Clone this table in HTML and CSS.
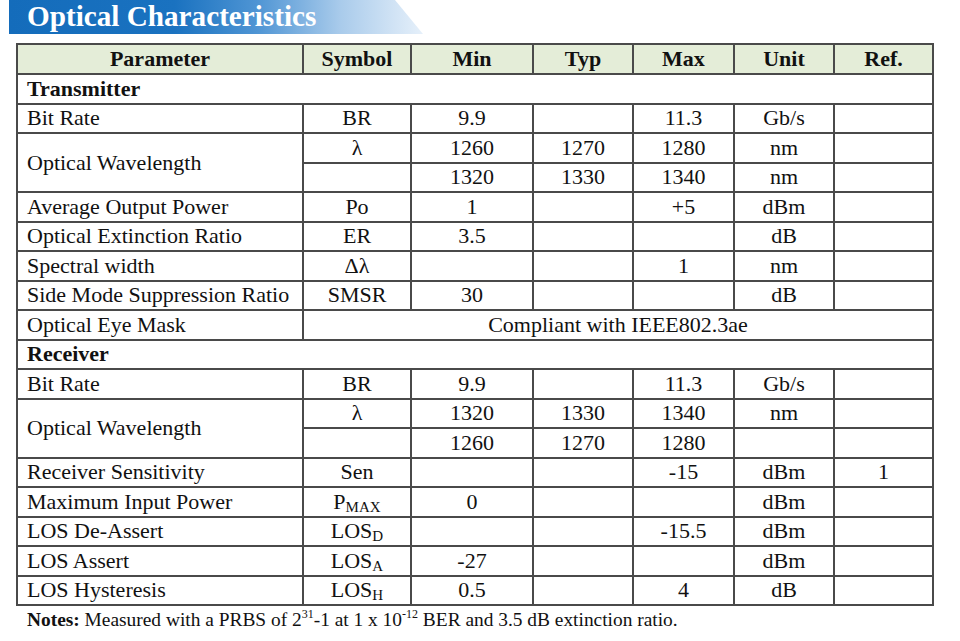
FILE: index.html
```html
<!DOCTYPE html>
<html>
<head>
<meta charset="utf-8">
<link rel="stylesheet" href="styles.css">
</head>
<body>
<div class="page">
  <div class="banner"><h1>Optical Characteristics</h1></div>
  <table class="spec">
    <colgroup>
      <col class="c-param"><col class="c-sym"><col class="c-min"><col class="c-typ"><col class="c-max"><col class="c-unit"><col class="c-ref">
    </colgroup>
    <thead>
      <tr><th>Parameter</th><th>Symbol</th><th>Min</th><th>Typ</th><th>Max</th><th>Unit</th><th>Ref.</th></tr>
    </thead>
    <tbody>
      <tr><td colspan="7" class="section">Transmitter</td></tr>
      <tr><td class="param">Bit Rate</td><td>BR</td><td>9.9</td><td></td><td>11.3</td><td>Gb/s</td><td></td></tr>
      <tr><td class="param" rowspan="2">Optical Wavelength</td><td>λ</td><td>1260</td><td>1270</td><td>1280</td><td>nm</td><td></td></tr>
      <tr><td></td><td>1320</td><td>1330</td><td>1340</td><td>nm</td><td></td></tr>
      <tr><td class="param">Average Output Power</td><td>Po</td><td>1</td><td></td><td>+5</td><td>dBm</td><td></td></tr>
      <tr><td class="param">Optical Extinction Ratio</td><td>ER</td><td>3.5</td><td></td><td></td><td>dB</td><td></td></tr>
      <tr><td class="param">Spectral width</td><td>Δλ</td><td></td><td></td><td>1</td><td>nm</td><td></td></tr>
      <tr><td class="param">Side Mode Suppression Ratio</td><td>SMSR</td><td>30</td><td></td><td></td><td>dB</td><td></td></tr>
      <tr><td class="param">Optical Eye Mask</td><td colspan="6">Compliant with IEEE802.3ae</td></tr>
      <tr><td colspan="7" class="section">Receiver</td></tr>
      <tr><td class="param">Bit Rate</td><td>BR</td><td>9.9</td><td></td><td>11.3</td><td>Gb/s</td><td></td></tr>
      <tr><td class="param" rowspan="2">Optical Wavelength</td><td>λ</td><td>1320</td><td>1330</td><td>1340</td><td>nm</td><td></td></tr>
      <tr><td></td><td>1260</td><td>1270</td><td>1280</td><td></td><td></td></tr>
      <tr><td class="param">Receiver Sensitivity</td><td>Sen</td><td></td><td></td><td>-15</td><td>dBm</td><td>1</td></tr>
      <tr><td class="param">Maximum Input Power</td><td>P<sub>MAX</sub></td><td>0</td><td></td><td></td><td>dBm</td><td></td></tr>
      <tr><td class="param">LOS De-Assert</td><td>LOS<sub>D</sub></td><td></td><td></td><td>-15.5</td><td>dBm</td><td></td></tr>
      <tr><td class="param">LOS Assert</td><td>LOS<sub>A</sub></td><td>-27</td><td></td><td></td><td>dBm</td><td></td></tr>
      <tr><td class="param">LOS Hysteresis</td><td>LOS<sub>H</sub></td><td>0.5</td><td></td><td>4</td><td>dB</td><td></td></tr>
    </tbody>
  </table>
  <p class="notes"><b>Notes:</b> Measured with a PRBS of 2<sup>31</sup>-1 at 1 x 10<sup>-12</sup> BER and 3.5 dB extinction ratio.</p>
</div>
</body>
</html>
```
FILE: styles.css
```css
html, body {
  margin: 0;
  padding: 0;
  background: #ffffff;
}
.page {
  width: 960px;
  height: 641px;
  font-family: "Liberation Serif", "Times New Roman", serif;
  color: #111;
}
.banner {
  margin-left: 9px;
  width: 414px;
  height: 34px;
  background: linear-gradient(90deg, #146cbb 0%, #1a72c0 40%, #4f95d4 60%, #a9cbeb 80%, #e6f0fa 100%);
  clip-path: polygon(0 0, 386px 0, 414px 34px, 0 34px);
}
.banner h1 {
  margin: 0;
  padding-left: 18px;
  font-size: 29.2px;
  line-height: 32px;
  font-weight: bold;
  color: #ffffff;
}
.spec {
  margin: 9px 0 0 16px;
  width: 916px;
  border-collapse: collapse;
  table-layout: fixed;
  font-size: 22px;
}
.c-param { width: 286px; }
.c-sym { width: 108px; }
.c-min { width: 122px; }
.c-typ { width: 100px; }
.c-max { width: 101px; }
.c-unit { width: 100px; }
.c-ref { width: 99px; }
.spec th, .spec td {
  border: 2px solid #4a4a4a;
  padding: 0 4px;
  height: 27.5px;
  text-align: center;
  vertical-align: middle;
  line-height: 24px;
  white-space: nowrap;
}
.spec th {
  background: #e4edd8;
  font-weight: bold;
  height: 28px;
}
.spec td.param, .spec td.section {
  text-align: left;
  padding-left: 9px;
}
.spec td.section {
  font-weight: bold;
}
.spec sub {
  font-size: 15px;
  line-height: 0;
  vertical-align: -3px;
}
.notes {
  margin: 3px 0 0 27px;
  font-size: 19.4px;
  line-height: 22px;
}
.notes sup {
  font-size: 12px;
  line-height: 0;
  vertical-align: 8px;
}
```
